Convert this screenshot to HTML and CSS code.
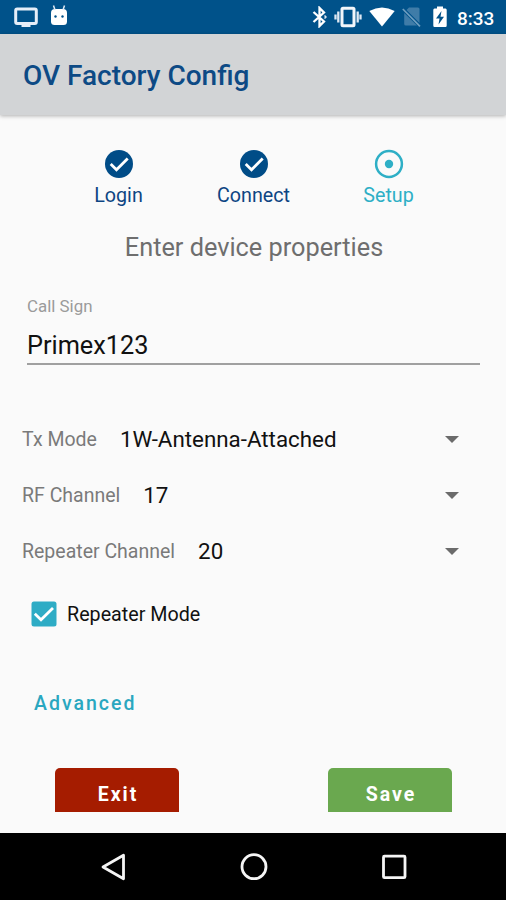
FILE: index.html
```html
<!DOCTYPE html>
<html lang="en">

<head>
  <meta charset="UTF-8">
  <meta name="viewport" content="width=device-width, initial-scale=1.0">
  <title>OV Factory Config</title>
  <link rel="stylesheet" href="styles.css">
</head>

<body>
  <div class="status-bar">
    <svg class="icon-cast" width="24" height="21" viewBox="0 0 24 21">
      <rect x="1.7" y="2" width="20.6" height="14.6" rx="1.5" fill="none" stroke="#e6eef8" stroke-width="3"/>
      <path d="M7.5 17h9v3h-9z" fill="#e6eef8"/>
    </svg>
    <svg class="icon-debug" width="18" height="21" viewBox="0 0 18 21">
      <path d="M1 8Q1 4 5 4H13Q17 4 17 8V16.5Q17 20 13.5 20H4.5Q1 20 1 16.5Z" fill="#fff"/>
      <path d="M3.500 0.5L5 5M14.500 0.5L13 5" stroke="#dfe9f3" stroke-width="1.5"/>
      <circle cx="5.5" cy="11.500" r="1.2" fill="#00528a"/>
      <circle cx="12.5" cy="11.500" r="1.2" fill="#00528a"/>
    </svg>
    <div class="status-right">
      <svg width="15" height="22" viewBox="0 0 15 22">
        <path d="M1.5 6L12 15.5L7.5 20V2L12 6.5L1.5 16" fill="none" stroke="#fff" stroke-width="2.3"/>
        <path d="M12.500 9.500L14 11L12.500 12.500" fill="none" stroke="#dfe9f3" stroke-width="1.5"/>
      </svg>
      <svg width="28" height="22" viewBox="0 0 28 22">
        <rect x="8" y="2.3" width="12" height="17.400" rx="1" fill="none" stroke="#f2f6fa" stroke-width="3"/>
        <path d="M4.300 5.500v11M23.700 5.500v11M1.500 8.500v5M26.500 8.500v5" stroke="#dfe9f3" stroke-width="2.300"/>
      </svg>
      <svg width="26" height="22" viewBox="0 0 26 22">
        <path d="M0.300 5Q13 -2 25.700 5L13 20.500Z" fill="#fff"/>
      </svg>
      <svg width="19" height="22" viewBox="0 0 19 22">
        <path d="M7 1.500H16Q17.500 1.500 17.500 3V17L4.500 4ZM2.200 7L15 19.500H4Q2.200 19.500 2.200 18Z" fill="#3f7ca8"/>
        <path d="M0.800 3L18 20.300" stroke="#6f9fc0" stroke-width="1.700"/>
      </svg>
      <svg class="icon-battery" width="14" height="22" viewBox="0 0 14 22">
        <path d="M4 0.500H10V2.500H12.500Q13.700 2.500 13.700 4V19.500Q13.700 21 12.500 21H1.500Q0.300 21 0.300 19.500V4Q0.300 2.500 1.500 2.500H4Z" fill="#fff"/>
        <path d="M8.500 5L3 12.500H6.500L5.500 18.500L11 10.800H7.500Z" fill="#00528a"/>
      </svg>
      <span class="clock">8:33</span>
    </div>
  </div>

  <header class="toolbar">
    <h1>OV Factory Config</h1>
  </header>

  <main class="content">
    <div class="steps">
      <div class="step">
        <svg width="30" height="30" viewBox="0 0 30 30">
          <circle cx="15" cy="15" r="14" fill="#004c87"/>
          <path d="M6.700 15L12.500 20.700L23.700 9.500" fill="none" stroke="#fff" stroke-width="2.800"/>
        </svg>
        <span>Login</span>
      </div>
      <div class="step">
        <svg width="30" height="30" viewBox="0 0 30 30">
          <circle cx="15" cy="15" r="14" fill="#004c87"/>
          <path d="M6.700 15L12.500 20.700L23.700 9.500" fill="none" stroke="#fff" stroke-width="2.800"/>
        </svg>
        <span>Connect</span>
      </div>
      <div class="step active">
        <svg width="30" height="30" viewBox="0 0 30 30">
          <circle cx="15" cy="15" r="12.900" fill="none" stroke="#2eafc6" stroke-width="2.500"/>
          <circle cx="15" cy="15" r="4.200" fill="#2eafc6"/>
        </svg>
        <span>Setup</span>
      </div>
    </div>

    <h2 class="subtitle">Enter device properties</h2>

    <div class="field">
      <div class="field-label">Call Sign</div>
      <div class="field-value">Primex123</div>
    </div>

    <div class="spinners">
      <div class="spinner">
        <span class="spinner-label">Tx Mode</span>
        <span class="spinner-value">1W-Antenna-Attached</span>
        <span class="arrow"></span>
      </div>
      <div class="spinner">
        <span class="spinner-label">RF Channel</span>
        <span class="spinner-value">17</span>
        <span class="arrow"></span>
      </div>
      <div class="spinner">
        <span class="spinner-label">Repeater Channel</span>
        <span class="spinner-value">20</span>
        <span class="arrow"></span>
      </div>
    </div>

    <div class="checkbox-row">
      <svg width="26" height="26" viewBox="0 0 26 26">
        <rect x="0.500" y="0.500" width="25" height="25" rx="2.500" fill="#2eacc5"/>
        <path d="M3.800 12.800L10 18.700L22 7" fill="none" stroke="#fff" stroke-width="2.800"/>
      </svg>
      <span>Repeater Mode</span>
    </div>

    <div class="advanced">Advanced</div>

    <div class="actions">
      <button class="btn exit">Exit</button>
      <button class="btn save">Save</button>
    </div>
  </main>

  <nav class="nav-bar">
    <svg width="28" height="30" viewBox="0 0 28 30">
      <path d="M3 15L23.500 3.200V26.800Z" fill="none" stroke="#f5f5f5" stroke-width="2.800" stroke-linejoin="round"/>
    </svg>
    <svg width="28" height="30" viewBox="0 0 28 30">
      <circle cx="14" cy="14.700" r="12" fill="none" stroke="#f5f5f5" stroke-width="2.800"/>
    </svg>
    <svg width="28" height="30" viewBox="0 0 28 30">
      <rect x="3.500" y="4.200" width="21.500" height="21.500" rx="1" fill="none" stroke="#f5f5f5" stroke-width="2.800"/>
    </svg>
  </nav>
</body>

</html>
```
FILE: styles.css
```css
* {
  box-sizing: border-box;
}

body {
  margin: 0;
  height: 900px;
  display: flex;
  flex-direction: column;
  overflow: hidden;
  font-family: Roboto, sans-serif;
  background-color: #fafafa;
  color: #111;
}

svg {
  display: block;
  flex: none;
}

/* Status bar */
.status-bar {
  flex: none;
  display: flex;
  align-items: center;
  height: 34px;
  padding: 0 11px 0 14px;
  background-color: #00528a;
}

.icon-debug {
  margin: -3px 0 0 12px;
}

.status-right {
  display: flex;
  align-items: center;
  gap: 7px;
  margin-left: auto;
}

.icon-battery {
  margin-left: 5px;
}

.clock {
  width: 38px;
  margin: 2px 0 0 3px;
  font-size: 19px;
  font-weight: 500;
  color: #fff;
  white-space: nowrap;
}

/* Toolbar */
.toolbar {
  flex: none;
  display: flex;
  align-items: center;
  height: 81px;
  padding: 1px 0 0 23px;
  background-color: #d2d4d6;
  box-shadow: 0 1px 4px rgba(0, 0, 0, 0.3);
}

.toolbar h1 {
  margin: 0;
  font-size: 28px;
  font-weight: 500;
  color: #0d4a85;
}

/* Content */
.content {
  flex: 1;
  display: flex;
  flex-direction: column;
  min-height: 0;
}

.steps {
  display: grid;
  grid-template-columns: repeat(3, 135px);
  justify-content: center;
  padding: 34px 0 0 1px;
}

.step {
  display: flex;
  flex-direction: column;
  align-items: center;
  gap: 5px;
  font-size: 19.700px;
  line-height: 24px;
  color: #0d4583;
}

.step.active {
  color: #2eafc6;
}

.subtitle {
  margin: 25px 0 0;
  padding-left: 2px;
  font-size: 25.300px;
  line-height: 30px;
  font-weight: 400;
  text-align: center;
  color: #6e6e6e;
}

.field {
  margin: 33px 26px 0 27px;
  border-bottom: 2px solid #a0a0a0;
}

.field-label {
  font-size: 16.900px;
  line-height: 20px;
  color: #9b9b9b;
}

.field-value {
  padding: 15px 0 2px;
  font-size: 25.300px;
  line-height: 30px;
}

.spinners {
  margin-top: 46px;
}

.spinner {
  display: flex;
  align-items: center;
  height: 56px;
  padding: 0 47px 0 22px;
}

.spinner-label {
  font-size: 19.500px;
  color: #7a7a7a;
}

.spinner-value {
  margin-left: 23px;
  font-size: 22.350px;
}

.arrow {
  margin-left: auto;
  border: 7px solid transparent;
  border-top-color: #6b6b6b;
  border-bottom: 0;
}

.checkbox-row {
  display: flex;
  align-items: center;
  gap: 10px;
  margin-top: 21px;
  padding-left: 31px;
  font-size: 19.700px;
  line-height: 26px;
}

.checkbox-row span {
  padding-top: 2px;
}

.advanced {
  margin: 64px 0 0 34px;
  font-size: 19.500px;
  line-height: 24px;
  font-weight: 500;
  letter-spacing: 2px;
  color: #2aa7c0;
}

/* Buttons */
.actions {
  display: flex;
  justify-content: space-between;
  margin-top: 52px;
  padding: 0 54px 0 55px;
}

.btn {
  width: 124px;
  height: 44px;
  padding: 8px 0 0 2px;
  border: none;
  border-radius: 5px 5px 0 0;
  font-family: inherit;
  font-size: 19.500px;
  font-weight: 700;
  letter-spacing: 2px;
  color: #fff;
}

.exit {
  background-color: #a51c00;
}

.save {
  background-color: #6aa84f;
}

/* Navigation bar */
.nav-bar {
  flex: none;
  display: flex;
  justify-content: center;
  gap: 112px;
  height: 67px;
  padding: 19px 0 0 2px;
  background-color: #000;
}
```
